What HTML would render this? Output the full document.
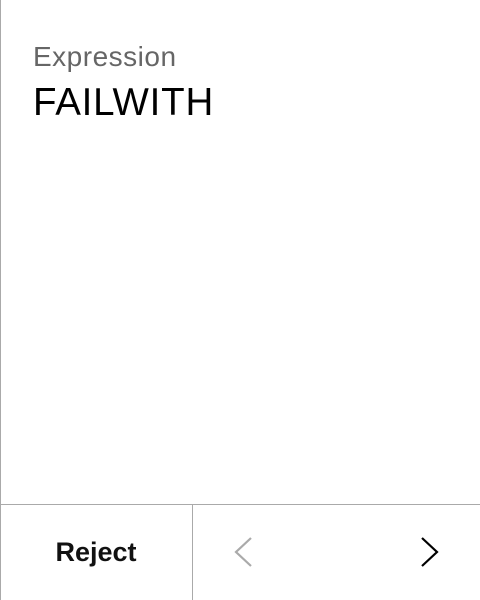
<!DOCTYPE html>
<html><head><style>
html,body{margin:0;padding:0;width:480px;height:600px;background:#fff;overflow:hidden;font-family:"Liberation Sans",sans-serif}
.l{position:absolute;left:0;top:0;width:1px;height:600px;background:#aaa}
.h{position:absolute;left:0;top:504px;width:480px;height:1px;background:#aaa}
.v{position:absolute;left:192px;top:504px;width:1px;height:96px;background:#aaa}
.t1{position:absolute;left:33px;top:41px;font-size:28px;color:#666;line-height:32px;letter-spacing:0.5px}
.t2{position:absolute;left:33px;top:83px;font-size:38.5px;color:#000;line-height:40px;letter-spacing:0.8px}
.r{position:absolute;left:0;top:532px;width:192px;text-align:center;font-weight:bold;font-size:27px;line-height:40px;color:#111}
</style></head><body>
<div class="l"></div><div class="h"></div><div class="v"></div>
<div class="t1">Expression</div>
<div class="t2">FAILWITH</div>
<div class="r">Reject</div>
<svg style="position:absolute;left:0;top:0" width="480" height="600">
<path d="M251 538 L236 552 L251 566" fill="none" stroke="#aaa" stroke-width="2.2"/>
<path d="M422 538 L437 552 L422 566" fill="none" stroke="#000" stroke-width="2.2"/>
</svg>
</body></html>
